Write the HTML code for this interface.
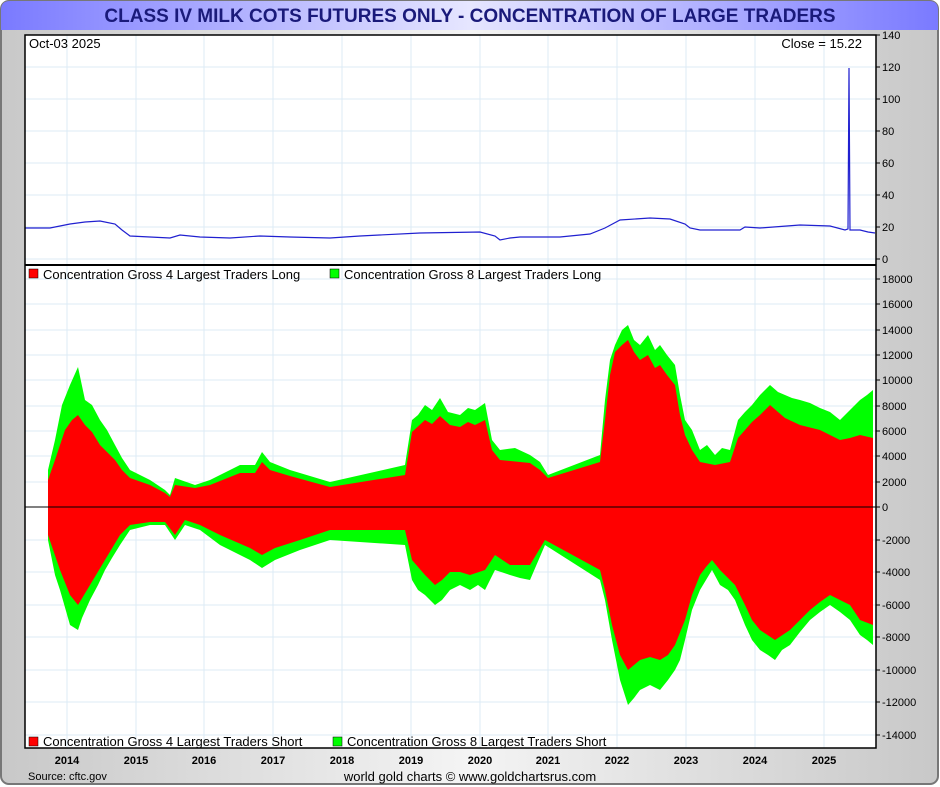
<!DOCTYPE html>
<html><head><meta charset="utf-8"><style>
html,body{margin:0;padding:0;width:940px;height:787px;overflow:hidden;background:#fff;font-family:"Liberation Sans",sans-serif}
</style></head><body>
<svg width="940" height="787" viewBox="0 0 940 787" xmlns="http://www.w3.org/2000/svg" font-family="Liberation Sans, sans-serif">
<defs>
<linearGradient id="bg" x1="0" x2="1" y1="0" y2="0"><stop offset="0" stop-color="#c8c8c8"/><stop offset="0.5" stop-color="#f4f4f4"/><stop offset="1" stop-color="#c8c8c8"/></linearGradient>
<linearGradient id="tt" x1="0" x2="1" y1="0" y2="0"><stop offset="0" stop-color="#7a7aff"/><stop offset="0.5" stop-color="#e6e6ff"/><stop offset="1" stop-color="#7a7aff"/></linearGradient>
</defs>
<rect x="1" y="1" width="937" height="783" rx="8" fill="url(#bg)" stroke="#777" stroke-width="2"/>
<path d="M1 30 V10 Q1 1 10 1 H929 Q938 1 938 10 V30 Z" fill="url(#tt)"/>
<text x="470" y="22" text-anchor="middle" font-size="19" font-weight="bold" fill="#1a1a7a">CLASS IV MILK COTS FUTURES ONLY - CONCENTRATION OF LARGE TRADERS</text>
<rect x="25" y="35" width="851" height="713" fill="#fff"/>
<g stroke="#dcebf5" stroke-width="1">
<line x1="67" y1="35" x2="67" y2="748"/><line x1="136" y1="35" x2="136" y2="748"/><line x1="204" y1="35" x2="204" y2="748"/><line x1="273" y1="35" x2="273" y2="748"/><line x1="342" y1="35" x2="342" y2="748"/><line x1="411" y1="35" x2="411" y2="748"/><line x1="480" y1="35" x2="480" y2="748"/><line x1="548" y1="35" x2="548" y2="748"/><line x1="617" y1="35" x2="617" y2="748"/><line x1="686" y1="35" x2="686" y2="748"/><line x1="755" y1="35" x2="755" y2="748"/><line x1="824" y1="35" x2="824" y2="748"/>
<line x1="25" y1="67" x2="876" y2="67"/><line x1="25" y1="99" x2="876" y2="99"/><line x1="25" y1="131" x2="876" y2="131"/><line x1="25" y1="163" x2="876" y2="163"/><line x1="25" y1="195" x2="876" y2="195"/><line x1="25" y1="227" x2="876" y2="227"/><line x1="25" y1="259" x2="876" y2="259"/>
<line x1="25" y1="279" x2="876" y2="279"/><line x1="25" y1="304" x2="876" y2="304"/><line x1="25" y1="330" x2="876" y2="330"/><line x1="25" y1="355" x2="876" y2="355"/><line x1="25" y1="380" x2="876" y2="380"/><line x1="25" y1="406" x2="876" y2="406"/><line x1="25" y1="431" x2="876" y2="431"/><line x1="25" y1="456" x2="876" y2="456"/><line x1="25" y1="482" x2="876" y2="482"/><line x1="25" y1="540" x2="876" y2="540"/><line x1="25" y1="572" x2="876" y2="572"/><line x1="25" y1="605" x2="876" y2="605"/><line x1="25" y1="637" x2="876" y2="637"/><line x1="25" y1="670" x2="876" y2="670"/><line x1="25" y1="702" x2="876" y2="702"/><line x1="25" y1="735" x2="876" y2="735"/>
</g>
<polygon fill="#00ff00" points="48,470 55,440 62,405 70,385 78,367 85,400 92,405 100,420 107,430 115,445 122,458 130,470 150,480 165,490 170,495 175,478 195,485 210,480 240,465 255,465 262,452 270,462 290,470 330,482 405,465 412,420 418,415 425,405 432,410 440,398 448,412 460,415 468,408 475,410 485,403 492,440 500,450 515,448 530,455 540,462 548,475 600,455 605,400 610,360 615,345 622,330 628,325 634,340 640,345 648,335 655,350 660,345 667,355 675,365 680,395 685,420 692,430 700,450 707,445 715,455 722,448 730,450 738,420 745,412 752,405 760,395 770,385 778,392 785,395 792,398 800,400 810,403 820,408 830,412 840,420 850,410 860,400 867,395 873,390 873,645 867,640 860,635 850,620 840,612 830,605 820,612 810,620 800,632 790,645 782,650 775,660 768,655 760,650 752,640 745,625 735,600 728,590 720,585 712,570 706,580 700,590 692,610 685,640 680,660 675,670 668,680 660,690 650,685 640,690 634,698 628,705 620,680 612,640 605,600 600,580 545,545 530,580 520,578 510,575 495,570 485,590 478,585 470,590 460,585 450,590 442,600 435,605 425,595 418,590 412,580 405,545 330,540 300,550 275,560 262,568 250,560 220,545 200,530 185,525 175,540 165,525 150,525 130,530 120,545 112,558 105,570 98,585 90,600 82,618 78,630 70,625 60,590 55,575 48,540"/>
<polygon fill="#ff0000" points="48,480 55,460 65,430 72,420 78,415 85,425 92,432 100,445 107,452 115,460 122,470 130,478 150,485 165,493 170,497 175,485 195,488 210,485 240,473 255,473 262,462 270,470 290,476 330,487 405,475 412,432 425,420 432,424 440,416 450,425 460,427 468,422 475,425 485,420 492,450 500,460 530,463 540,470 548,478 600,462 605,420 610,375 615,352 622,345 628,340 634,352 640,360 648,355 655,368 660,365 667,375 675,385 680,415 685,435 692,450 700,462 715,465 730,462 738,438 745,430 752,422 760,415 770,405 778,412 785,418 800,425 820,430 830,435 840,440 850,438 860,435 873,438 873,625 860,620 850,605 840,600 830,595 820,602 810,610 800,620 790,630 775,640 760,630 752,620 745,605 735,585 720,570 712,560 706,567 700,575 692,595 685,620 675,645 668,655 660,660 650,657 640,660 634,665 628,670 620,655 612,625 605,590 600,570 545,540 530,565 510,565 495,555 485,570 470,575 460,572 450,572 442,580 435,585 425,575 412,560 405,530 330,530 300,540 275,548 262,555 250,548 220,535 200,525 185,520 175,535 165,522 150,522 130,525 120,535 105,560 90,585 78,605 70,595 60,570 48,535"/>
<line x1="25" y1="507" x2="876" y2="507" stroke="#000" stroke-width="1"/>
<polyline fill="none" stroke="#2020d0" stroke-width="1.2" points="25,228 50,228 70,224 85,222 100,221 115,224 122,230 130,236 150,237 170,238 180,235 200,237 230,238 260,236 290,237 330,238 360,236 420,233 480,232 495,236 500,240 510,238 520,237 560,237 590,234 605,228 620,220 650,218 670,219 685,224 690,228 700,230 740,230 745,227 760,228 800,225 830,226 845,230 848,229 849,68 850,230 860,230 868,232 875,233"/>
<line x1="25" y1="265" x2="876" y2="265" stroke="#000" stroke-width="2"/>
<rect x="25" y="35" width="851" height="713" fill="none" stroke="#000" stroke-width="1.5"/>
<g font-size="13" fill="#000">
<text x="29" y="48">Oct-03  2025</text>
<text x="862" y="48" text-anchor="end">Close = 15.22</text>
<rect x="29" y="269" width="9" height="9" fill="#f00" stroke="#000" stroke-width="0.5"/><text x="43" y="279">Concentration Gross 4 Largest Traders Long</text>
<rect x="330" y="269" width="9" height="9" fill="#0f0" stroke="#000" stroke-width="0.5"/><text x="344" y="279">Concentration Gross 8 Largest Traders Long</text>
<rect x="29" y="737" width="9" height="9" fill="#f00" stroke="#000" stroke-width="0.5"/><text x="43" y="746">Concentration Gross 4 Largest Traders Short</text>
<rect x="333" y="737" width="9" height="9" fill="#0f0" stroke="#000" stroke-width="0.5"/><text x="347" y="746">Concentration Gross 8 Largest Traders Short</text>
</g>
<g font-size="11" fill="#000">
<text x="882" y="39">140</text><text x="882" y="71">120</text><text x="882" y="103">100</text><text x="882" y="135">80</text><text x="882" y="167">60</text><text x="882" y="199">40</text><text x="882" y="231">20</text><text x="882" y="263">0</text>
<text x="882" y="283">18000</text><text x="882" y="308">16000</text><text x="882" y="334">14000</text><text x="882" y="359">12000</text><text x="882" y="384">10000</text><text x="882" y="410">8000</text><text x="882" y="435">6000</text><text x="882" y="460">4000</text><text x="882" y="486">2000</text><text x="882" y="511">0</text><text x="882" y="544">-2000</text><text x="882" y="576">-4000</text><text x="882" y="609">-6000</text><text x="882" y="641">-8000</text><text x="882" y="674">-10000</text><text x="882" y="706">-12000</text><text x="882" y="739">-14000</text>
</g>
<g stroke="#000" stroke-width="1">
<line x1="876" y1="35" x2="880" y2="35"/><line x1="876" y1="67" x2="880" y2="67"/><line x1="876" y1="99" x2="880" y2="99"/><line x1="876" y1="131" x2="880" y2="131"/><line x1="876" y1="163" x2="880" y2="163"/><line x1="876" y1="195" x2="880" y2="195"/><line x1="876" y1="227" x2="880" y2="227"/><line x1="876" y1="259" x2="880" y2="259"/>
<line x1="876" y1="279" x2="880" y2="279"/><line x1="876" y1="304" x2="880" y2="304"/><line x1="876" y1="330" x2="880" y2="330"/><line x1="876" y1="355" x2="880" y2="355"/><line x1="876" y1="380" x2="880" y2="380"/><line x1="876" y1="406" x2="880" y2="406"/><line x1="876" y1="431" x2="880" y2="431"/><line x1="876" y1="456" x2="880" y2="456"/><line x1="876" y1="482" x2="880" y2="482"/><line x1="876" y1="507" x2="880" y2="507"/><line x1="876" y1="540" x2="880" y2="540"/><line x1="876" y1="572" x2="880" y2="572"/><line x1="876" y1="605" x2="880" y2="605"/><line x1="876" y1="637" x2="880" y2="637"/><line x1="876" y1="670" x2="880" y2="670"/><line x1="876" y1="702" x2="880" y2="702"/><line x1="876" y1="735" x2="880" y2="735"/>
</g>
<g font-size="11" font-weight="bold" fill="#000" text-anchor="middle">
<text x="67" y="764">2014</text><text x="136" y="764">2015</text><text x="204" y="764">2016</text><text x="273" y="764">2017</text><text x="342" y="764">2018</text><text x="411" y="764">2019</text><text x="480" y="764">2020</text><text x="548" y="764">2021</text><text x="617" y="764">2022</text><text x="686" y="764">2023</text><text x="755" y="764">2024</text><text x="824" y="764">2025</text>
</g>
<text x="28" y="780" font-size="11">Source: cftc.gov</text>
<text x="470" y="781" font-size="13" text-anchor="middle">world gold charts © www.goldchartsrus.com</text>
</svg>
</body></html>
